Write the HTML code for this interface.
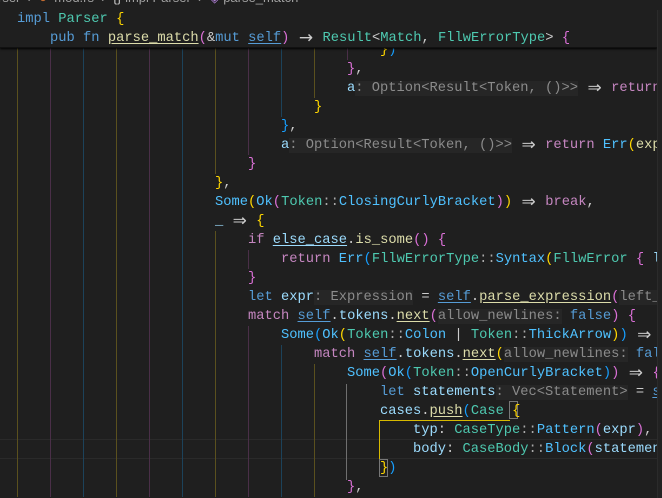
<!DOCTYPE html>
<html><head><meta charset="utf-8"><style>
*{margin:0;padding:0;box-sizing:border-box}
html,body{width:662px;height:498px;overflow:hidden;background:#1f1f1f}
#ed{position:absolute;left:0;top:0;width:657px;height:498px;overflow:hidden;background:#1f1f1f}
#sb{position:absolute;left:657px;top:10px;width:5px;height:488px;background:#222;border-left:1px solid #2b2b2b}
.l{position:absolute;left:17px;height:19px;line-height:19px;white-space:pre;font-family:"Liberation Mono","DejaVu Sans Mono",monospace;font-size:13.75px;color:#cccccc}
.g{display:inline-block;width:33px;height:19px;vertical-align:top;border-left:1px solid #5a501e}
.g.p{border-left-color:#4a2f48}
.g.q{border-left-color:#1c425a}
.k{color:#569cd6}.c{color:#c586c0}.t{color:#4ec9b0}.f{color:#dcdcaa}.v{color:#9cdcfe}.e{color:#4fc1ff}
.y{color:#ffd700}.o{color:#da70d6}.b{color:#179fff}
.h{color:#8b8b8b;background:#262626}
.u{text-decoration:underline;text-underline-offset:2px}
.a{display:inline-block;width:16.5px;text-align:center;font-family:"DejaVu Sans",sans-serif;font-size:17px;line-height:19px;vertical-align:top}
.cc{color:#aaa}
#st{position:absolute;left:0;top:0;width:657px;height:48px;background:#1f1f1f;box-shadow:0 1px 2px #000;border-bottom:1px solid #111}
#bc{position:absolute;left:-2px;top:-10px;font-family:"Liberation Sans","DejaVu Sans",sans-serif;font-size:13px;color:#a0a0a0;white-space:pre;line-height:16px}
#cur{position:absolute;left:0;top:439px;width:657px;height:20px;border-top:1px solid #2a2a2a;border-bottom:1px solid #2a2a2a}
#bp{position:absolute;left:379px;top:420px;width:131px;height:40px;border-top:1px solid #d7ba00;border-left:1px solid #d7ba00}
.bx{position:absolute;width:9px;height:18px;border:1px solid #777}
</style></head><body>
<div id="ed">
<div id="cur"></div>
<div id="bp"></div>
<div class="bx" style="left:509px;top:401px"></div>
<div class="bx" style="left:379px;top:459px"></div>
<div style="position:absolute;left:346px;top:384px;width:1px;height:96px;background:#6f6f6f"></div>

<div class="l" style="top:40.5px"><i class="g"></i><i class="g p"></i><i class="g q"></i><i class="g"></i><i class="g p"></i><i class="g q"></i><i class="g"></i><i class="g p"></i><i class="g q"></i><i class="g"></i><i class="g p"></i><span class="y">}</span><span class="b">)</span></div>
<div class="l" style="top:59.5px"><i class="g"></i><i class="g p"></i><i class="g q"></i><i class="g"></i><i class="g p"></i><i class="g q"></i><i class="g"></i><i class="g p"></i><i class="g q"></i><i class="g"></i><span class="o">}</span>,</div>
<div class="l" style="top:78.5px"><i class="g"></i><i class="g p"></i><i class="g q"></i><i class="g"></i><i class="g p"></i><i class="g q"></i><i class="g"></i><i class="g p"></i><i class="g q"></i><i class="g"></i><span class="v">a</span><span class="h">: Option&lt;Result&lt;Token, ()&gt;&gt;</span> <span class="a">⇒</span> <span class="c">return</span></div>
<div class="l" style="top:97.5px"><i class="g"></i><i class="g p"></i><i class="g q"></i><i class="g"></i><i class="g p"></i><i class="g q"></i><i class="g"></i><i class="g p"></i><i class="g q"></i><span class="y">}</span></div>
<div class="l" style="top:116.5px"><i class="g"></i><i class="g p"></i><i class="g q"></i><i class="g"></i><i class="g p"></i><i class="g q"></i><i class="g"></i><i class="g p"></i><span class="b">}</span>,</div>
<div class="l" style="top:135.5px"><i class="g"></i><i class="g p"></i><i class="g q"></i><i class="g"></i><i class="g p"></i><i class="g q"></i><i class="g"></i><i class="g p"></i><span class="v">a</span><span class="h">: Option&lt;Result&lt;Token, ()&gt;&gt;</span> <span class="a">⇒</span> <span class="c">return</span> <span class="e">Err</span><span class="y">(</span><span class="f">exp</span></div>
<div class="l" style="top:154.5px"><i class="g"></i><i class="g p"></i><i class="g q"></i><i class="g"></i><i class="g p"></i><i class="g q"></i><i class="g"></i><span class="o">}</span></div>
<div class="l" style="top:173.5px"><i class="g"></i><i class="g p"></i><i class="g q"></i><i class="g"></i><i class="g p"></i><i class="g q"></i><span class="y">}</span>,</div>
<div class="l" style="top:192.5px"><i class="g"></i><i class="g p"></i><i class="g q"></i><i class="g"></i><i class="g p"></i><i class="g q"></i><span class="e">Some</span><span class="y">(</span><span class="e">Ok</span><span class="o">(</span><span class="t">Token</span><span class="cc">::</span><span class="e">ClosingCurlyBracket</span><span class="o">)</span><span class="y">)</span> <span class="a">⇒</span> <span class="c">break</span>,</div>
<div class="l" style="top:211.5px"><i class="g"></i><i class="g p"></i><i class="g q"></i><i class="g"></i><i class="g p"></i><i class="g q"></i><span class="v">_</span> <span class="a">⇒</span> <span class="y">{</span></div>
<div class="l" style="top:230.5px"><i class="g"></i><i class="g p"></i><i class="g q"></i><i class="g"></i><i class="g p"></i><i class="g q"></i><i class="g"></i><span class="c">if</span> <span class="v u">else_case</span>.<span class="f">is_some</span><span class="o">()</span> <span class="o">{</span></div>
<div class="l" style="top:249.5px"><i class="g"></i><i class="g p"></i><i class="g q"></i><i class="g"></i><i class="g p"></i><i class="g q"></i><i class="g"></i><i class="g p"></i><span class="c">return</span> <span class="e">Err</span><span class="b">(</span><span class="t">FllwErrorType</span><span class="cc">::</span><span class="e">Syntax</span><span class="y">(</span><span class="t">FllwError</span> <span class="o">{</span> <span class="v">l</span></div>
<div class="l" style="top:268.5px"><i class="g"></i><i class="g p"></i><i class="g q"></i><i class="g"></i><i class="g p"></i><i class="g q"></i><i class="g"></i><span class="o">}</span></div>
<div class="l" style="top:287.5px"><i class="g"></i><i class="g p"></i><i class="g q"></i><i class="g"></i><i class="g p"></i><i class="g q"></i><i class="g"></i><span class="k">let</span> <span class="v">expr</span><span class="h">: Expression</span> = <span class="k u">self</span>.<span class="f u">parse_expression</span><span class="o">(</span><span class="h">left_</span></div>
<div class="l" style="top:306.5px"><i class="g"></i><i class="g p"></i><i class="g q"></i><i class="g"></i><i class="g p"></i><i class="g q"></i><i class="g"></i><span class="c">match</span> <span class="k u">self</span>.<span class="v">tokens</span>.<span class="f u">next</span><span class="o">(</span><span class="h">allow_newlines:</span> <span class="k">false</span><span class="o">)</span> <span class="o">{</span></div>
<div class="l" style="top:325.5px"><i class="g"></i><i class="g p"></i><i class="g q"></i><i class="g"></i><i class="g p"></i><i class="g q"></i><i class="g"></i><i class="g p"></i><span class="e">Some</span><span class="b">(</span><span class="e">Ok</span><span class="y">(</span><span class="t">Token</span><span class="cc">::</span><span class="e">Colon</span> | <span class="t">Token</span><span class="cc">::</span><span class="e">ThickArrow</span><span class="y">)</span><span class="b">)</span> <span class="a">⇒</span></div>
<div class="l" style="top:344.5px"><i class="g"></i><i class="g p"></i><i class="g q"></i><i class="g"></i><i class="g p"></i><i class="g q"></i><i class="g"></i><i class="g p"></i><i class="g q"></i><span class="c">match</span> <span class="k u">self</span>.<span class="v">tokens</span>.<span class="f u">next</span><span class="y">(</span><span class="h">allow_newlines:</span> <span class="k">fals</span></div>
<div class="l" style="top:363.5px"><i class="g"></i><i class="g p"></i><i class="g q"></i><i class="g"></i><i class="g p"></i><i class="g q"></i><i class="g"></i><i class="g p"></i><i class="g q"></i><i class="g"></i><span class="e">Some</span><span class="o">(</span><span class="e">Ok</span><span class="b">(</span><span class="t">Token</span><span class="cc">::</span><span class="e">OpenCurlyBracket</span><span class="b">)</span><span class="o">)</span> <span class="a">⇒</span> <span class="o">{</span></div>
<div class="l" style="top:382.5px"><i class="g"></i><i class="g p"></i><i class="g q"></i><i class="g"></i><i class="g p"></i><i class="g q"></i><i class="g"></i><i class="g p"></i><i class="g q"></i><i class="g"></i><i class="g p" style="border-left-color:transparent"></i><span class="k">let</span> <span class="v">statements</span><span class="h">: Vec&lt;Statement&gt;</span> = <span class="k u">s</span></div>
<div class="l" style="top:401.5px"><i class="g"></i><i class="g p"></i><i class="g q"></i><i class="g"></i><i class="g p"></i><i class="g q"></i><i class="g"></i><i class="g p"></i><i class="g q"></i><i class="g"></i><i class="g p" style="border-left-color:transparent"></i><span class="v">cases</span>.<span class="f u">push</span><span class="b">(</span><span class="t">Case</span> <span class="y">{</span></div>
<div class="l" style="top:420.5px"><i class="g"></i><i class="g p"></i><i class="g q"></i><i class="g"></i><i class="g p"></i><i class="g q"></i><i class="g"></i><i class="g p"></i><i class="g q"></i><i class="g"></i><i class="g p" style="border-left-color:transparent"></i><i class="g" style="border-left-color:transparent"></i><span class="v">typ</span>: <span class="t">CaseType</span><span class="cc">::</span><span class="e">Pattern</span><span class="o">(</span><span class="v">expr</span><span class="o">)</span>,</div>
<div class="l" style="top:439.5px"><i class="g"></i><i class="g p"></i><i class="g q"></i><i class="g"></i><i class="g p"></i><i class="g q"></i><i class="g"></i><i class="g p"></i><i class="g q"></i><i class="g"></i><i class="g p" style="border-left-color:transparent"></i><i class="g" style="border-left-color:transparent"></i><span class="v">body</span>: <span class="t">CaseBody</span><span class="cc">::</span><span class="e">Block</span><span class="o">(</span><span class="v">statemen</span></div>
<div class="l" style="top:458.5px"><i class="g"></i><i class="g p"></i><i class="g q"></i><i class="g"></i><i class="g p"></i><i class="g q"></i><i class="g"></i><i class="g p"></i><i class="g q"></i><i class="g"></i><i class="g p" style="border-left-color:transparent"></i><span class="y">}</span><span class="b">)</span></div>
<div class="l" style="top:477.5px"><i class="g"></i><i class="g p"></i><i class="g q"></i><i class="g"></i><i class="g p"></i><i class="g q"></i><i class="g"></i><i class="g p"></i><i class="g q"></i><i class="g"></i><span class="o">}</span>,</div>

<div id="st">
<div id="bc">rser  ›  <span style="color:#c06a30">●</span>  mod.rs  ›  <span style="color:#ccc">{}</span> impl Parser  ›  <span style="color:#b180d7">◈</span> parse_match</div>
<div class="l" style="top:9.5px"><span class="k">impl</span> <span class="t">Parser</span> <span class="y">{</span></div>
<div class="l" style="top:28.5px;left:50px"><span class="k">pub</span> <span class="k">fn</span> <span class="f u">parse_match</span><span class="o">(</span>&amp;<span class="k">mut</span> <span class="k u">self</span><span class="o">)</span> <span class="a">→</span> <span class="t">Result</span>&lt;<span class="t">Match</span>, <span class="t">FllwErrorType</span>&gt; <span class="o">{</span></div>
</div>
</div>
<div id="sb"></div>
</body></html>
